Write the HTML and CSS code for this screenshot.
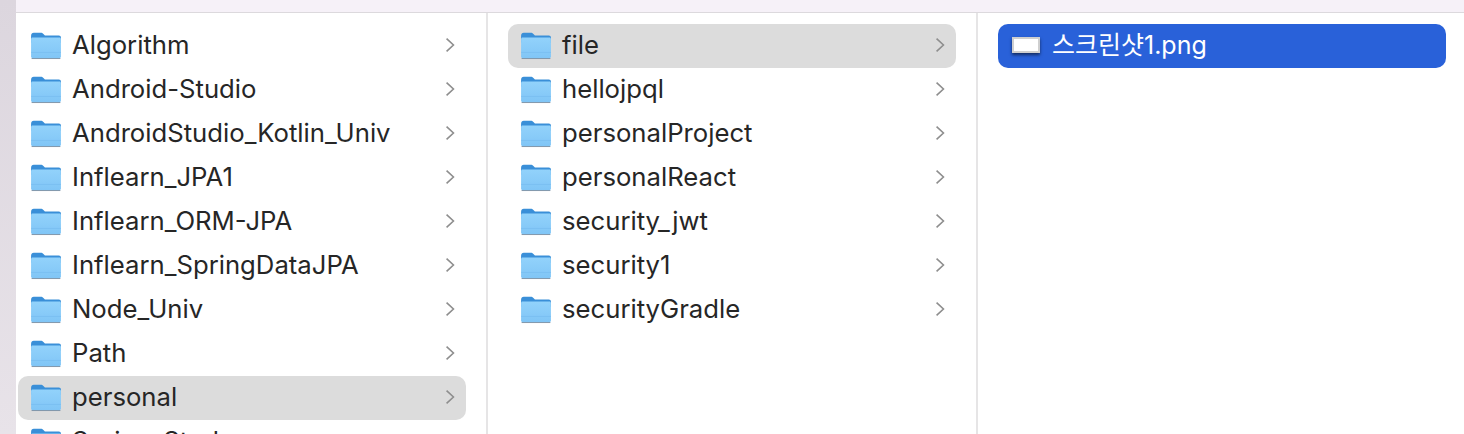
FILE: index.html
```html
<!DOCTYPE html>
<html lang="ko">
<head>
  <meta charset="UTF-8" />
  <title>Finder</title>
  <link rel="stylesheet" href="styles.css">
</head>
<body>
  <svg class="defs" width="0" height="0">
    <defs>
      <linearGradient id="folderBody" x1="0" y1="0" x2="0" y2="1">
        <stop offset="0" stop-color="#92d2fb" />
        <stop offset="1" stop-color="#80c5f6" />
      </linearGradient>
      <symbol id="folder" viewBox="0 0 30 28">
        <path d="M1 5.5C1 3.5 2 2.5 3.5 2.5H10C11.2 2.5 11.8 3 12.6 3.8L14 5H27C28.3 5 29 5.8 29 7V12H1Z" fill="#3a8fd8" />
        <path d="M1 8.5C1 7.6 1.6 7 2.5 7H27.5C28.4 7 29 7.6 29 8.5V24.5C29 25.8 28.2 26.5 27 26.5H3C1.8 26.5 1 25.8 1 24.5Z" fill="url(#folderBody)" />
        <path d="M1 21H29" stroke="#78bdef" stroke-width="0.7" />
        <path d="M1.5 26.7H28.5" stroke="#7c93a8" stroke-width="0.9" />
      </symbol>
      <symbol id="chevron" viewBox="0 0 10 14">
        <path d="M2 1.5L8 7L2 12.5" fill="none" stroke="#8e8e8e" stroke-width="1.4" />
      </symbol>
    </defs>
  </svg>

  <div class="window">
    <div class="side-strip"></div>
    <div class="main">
      <div class="top-bar"></div>
      <div class="columns">
        <!-- first column -->
        <div class="column col-first">
          <div class="row"><svg class="icon"><use href="#folder" /></svg><span class="name">Algorithm</span><svg class="chev"><use href="#chevron" /></svg></div>
          <div class="row"><svg class="icon"><use href="#folder" /></svg><span class="name">Android-Studio</span><svg class="chev"><use href="#chevron" /></svg></div>
          <div class="row"><svg class="icon"><use href="#folder" /></svg><span class="name">AndroidStudio_Kotlin_Univ</span><svg class="chev"><use href="#chevron" /></svg></div>
          <div class="row"><svg class="icon"><use href="#folder" /></svg><span class="name">Inflearn_JPA1</span><svg class="chev"><use href="#chevron" /></svg></div>
          <div class="row"><svg class="icon"><use href="#folder" /></svg><span class="name">Inflearn_ORM-JPA</span><svg class="chev"><use href="#chevron" /></svg></div>
          <div class="row"><svg class="icon"><use href="#folder" /></svg><span class="name">Inflearn_SpringDataJPA</span><svg class="chev"><use href="#chevron" /></svg></div>
          <div class="row"><svg class="icon"><use href="#folder" /></svg><span class="name">Node_Univ</span><svg class="chev"><use href="#chevron" /></svg></div>
          <div class="row"><svg class="icon"><use href="#folder" /></svg><span class="name">Path</span><svg class="chev"><use href="#chevron" /></svg></div>
          <div class="row selected"><svg class="icon"><use href="#folder" /></svg><span class="name">personal</span><svg class="chev"><use href="#chevron" /></svg></div>
          <div class="row"><svg class="icon"><use href="#folder" /></svg><span class="name">Spring-Study</span><svg class="chev"><use href="#chevron" /></svg></div>
        </div>

        <!-- second column -->
        <div class="column col-second">
          <div class="row selected"><svg class="icon"><use href="#folder" /></svg><span class="name">file</span><svg class="chev"><use href="#chevron" /></svg></div>
          <div class="row"><svg class="icon"><use href="#folder" /></svg><span class="name">hellojpql</span><svg class="chev"><use href="#chevron" /></svg></div>
          <div class="row"><svg class="icon"><use href="#folder" /></svg><span class="name">personalProject</span><svg class="chev"><use href="#chevron" /></svg></div>
          <div class="row"><svg class="icon"><use href="#folder" /></svg><span class="name">personalReact</span><svg class="chev"><use href="#chevron" /></svg></div>
          <div class="row"><svg class="icon"><use href="#folder" /></svg><span class="name">security_jwt</span><svg class="chev"><use href="#chevron" /></svg></div>
          <div class="row"><svg class="icon"><use href="#folder" /></svg><span class="name">security1</span><svg class="chev"><use href="#chevron" /></svg></div>
          <div class="row"><svg class="icon"><use href="#folder" /></svg><span class="name">securityGradle</span><svg class="chev"><use href="#chevron" /></svg></div>
        </div>

        <!-- third column -->
        <div class="column col-third">
          <div class="row active">
            <span class="thumb"></span>
            <span class="name">스크린샷1.png</span>
          </div>
        </div>
      </div>
    </div>
  </div>
</body>
</html>
```

FILE: styles.css
```css
* {
  box-sizing: border-box;
}

html,
body {
  margin: 0;
  padding: 0;
  height: 100%;
  overflow: hidden;
  background: #ffffff;
  font-family: Inter, "Noto Sans CJK KR", sans-serif;
}

.defs {
  display: block;
}

.window {
  display: flex;
  width: 1464px;
  height: 434px;
}

.side-strip {
  width: 16px;
  background: linear-gradient(180deg, #dcd6de 0%, #e8e3e9 100%);
}

.main {
  flex: 1;
  display: flex;
  flex-direction: column;
  min-width: 0;
}

.top-bar {
  height: 13px;
  background: #f6f1f8;
  border-bottom: 1px solid #dcd9dd;
}

.columns {
  flex: 1;
  display: flex;
  min-height: 0;
  overflow: hidden;
}

.column {
  padding-top: 11px;
  padding-right: 20px;
}

.col-first {
  width: 472px;
  padding-left: 2px;
  border-right: 2px solid #e6e5e6;
}

.col-second {
  width: 490px;
  padding-left: 20px;
  border-right: 2px solid #e6e5e6;
}

.col-third {
  flex: 1;
  padding-left: 20px;
  padding-right: 18px;
}

.row {
  display: flex;
  align-items: center;
  height: 44px;
  padding-left: 12px;
  padding-right: 10px;
  border-radius: 10px;
  color: #262626;
  font-size: 25.7px;
}

.selected {
  background: #dcdcdc;
}

.active {
  background: #2961d9;
  color: #ffffff;
  padding-left: 14px;
  font-size: 25px;
}

.icon {
  width: 32px;
  height: 30px;
  flex: none;
  margin-bottom: 2px;
}

.name {
  flex: 1;
  margin-left: 10px;
  margin-bottom: 4px;
  white-space: nowrap;
}

.chev {
  width: 12px;
  height: 16px;
  flex: none;
  margin-bottom: 2px;
}

.thumb {
  width: 28px;
  height: 16px;
  flex: none;
  margin-bottom: 2px;
  background: #ffffff;
  border: 2px solid #cfcfcf;
  box-shadow: 0 2px 3px rgba(0, 0, 0, 0.55);
}

.active .name {
  margin-left: 12px;
  margin-bottom: 6px;
}
```
